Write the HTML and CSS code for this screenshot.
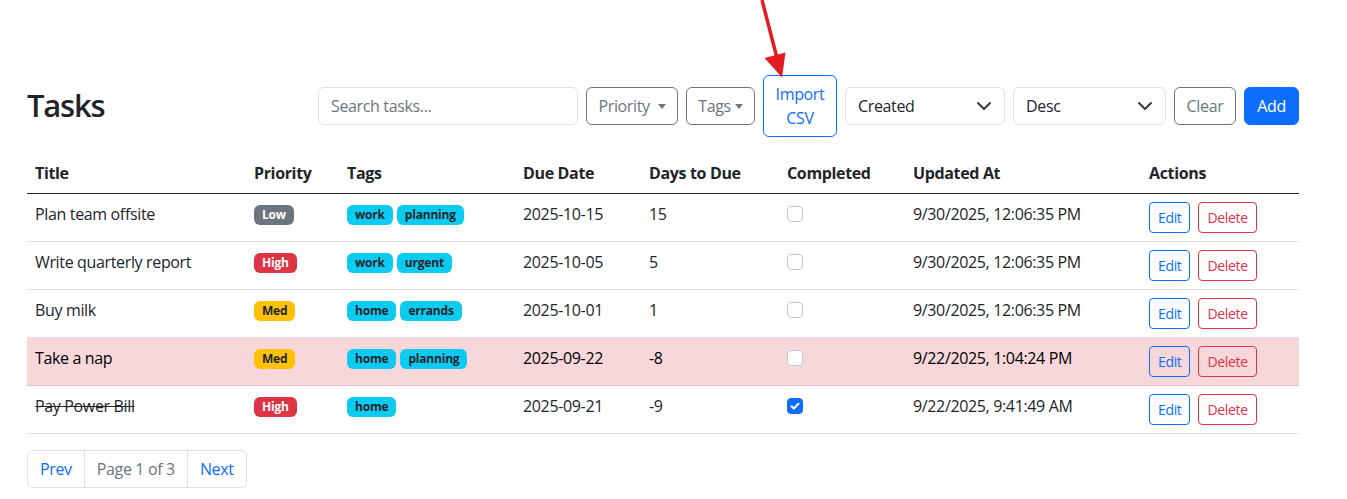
FILE: index.html
```html
<!DOCTYPE html>
<html lang="en">
<head>
<meta charset="utf-8">
<title>Tasks</title>
<link rel="stylesheet" href="styles.css">
</head>
<body>
<svg class="arrow" width="50" height="82" viewBox="0 0 50 82">
  <line x1="12" y1="0" x2="27" y2="58" stroke="#e31b23" stroke-width="3.5"/>
  <polygon points="14.5,58 35.5,52.5 32,77.5" fill="#e31b23"/>
</svg>
<div class="container">
  <div class="header">
    <h2 class="title">Tasks</h2>
    <div class="toolbar">
      <div class="input search">Search tasks...</div>
      <button class="btn btn-outline-secondary w-prio">Priority <span class="caret"></span></button>
      <button class="btn btn-outline-secondary w-tags">Tags<span class="caret"></span></button>
      <button class="btn btn-outline-primary import">Import CSV</button>
      <div class="select sel-created"><span>Created</span><svg width="16" height="16" viewBox="0 0 16 16"><path d="M2 5l6 6 6-6" fill="none" stroke="#343a40" stroke-width="2" stroke-linecap="round" stroke-linejoin="round"/></svg></div>
      <div class="select sel-desc"><span>Desc</span><svg width="16" height="16" viewBox="0 0 16 16"><path d="M2 5l6 6 6-6" fill="none" stroke="#343a40" stroke-width="2" stroke-linecap="round" stroke-linejoin="round"/></svg></div>
      <button class="btn btn-outline-secondary w-clear">Clear</button>
      <button class="btn btn-primary w-add">Add</button>
    </div>
  </div>

  <table class="table">
    <colgroup>
      <col class="c-title"><col class="c-prio"><col class="c-tags"><col class="c-due"><col class="c-days"><col class="c-comp"><col class="c-upd"><col class="c-act">
    </colgroup>
    <thead>
      <tr><th>Title</th><th>Priority</th><th>Tags</th><th>Due Date</th><th>Days to Due</th><th>Completed</th><th>Updated At</th><th>Actions</th></tr>
    </thead>
    <tbody>
      <tr>
        <td>Plan team offsite</td>
        <td><span class="badge b-low">Low</span></td>
        <td><span class="badge b-tag">work</span><span class="badge b-tag">planning</span></td>
        <td>2025-10-15</td>
        <td>15</td>
        <td><span class="check"></span></td>
        <td>9/30/2025, 12:06:35 PM</td>
        <td><div class="actions"><button class="btn btn-sm btn-outline-primary">Edit</button><button class="btn btn-sm btn-outline-danger">Delete</button></div></td>
      </tr>
      <tr>
        <td>Write quarterly report</td>
        <td><span class="badge b-high">High</span></td>
        <td><span class="badge b-tag">work</span><span class="badge b-tag">urgent</span></td>
        <td>2025-10-05</td>
        <td>5</td>
        <td><span class="check"></span></td>
        <td>9/30/2025, 12:06:35 PM</td>
        <td><div class="actions"><button class="btn btn-sm btn-outline-primary">Edit</button><button class="btn btn-sm btn-outline-danger">Delete</button></div></td>
      </tr>
      <tr>
        <td>Buy milk</td>
        <td><span class="badge b-med">Med</span></td>
        <td><span class="badge b-tag">home</span><span class="badge b-tag">errands</span></td>
        <td>2025-10-01</td>
        <td>1</td>
        <td><span class="check"></span></td>
        <td>9/30/2025, 12:06:35 PM</td>
        <td><div class="actions"><button class="btn btn-sm btn-outline-primary">Edit</button><button class="btn btn-sm btn-outline-danger">Delete</button></div></td>
      </tr>
      <tr class="row-danger">
        <td>Take a nap</td>
        <td><span class="badge b-med">Med</span></td>
        <td><span class="badge b-tag">home</span><span class="badge b-tag">planning</span></td>
        <td>2025-09-22</td>
        <td>-8</td>
        <td><span class="check"></span></td>
        <td>9/22/2025, 1:04:24 PM</td>
        <td><div class="actions"><button class="btn btn-sm btn-outline-primary">Edit</button><button class="btn btn-sm btn-outline-danger">Delete</button></div></td>
      </tr>
      <tr>
        <td><span class="done">Pay Power Bill</span></td>
        <td><span class="badge b-high">High</span></td>
        <td><span class="badge b-tag">home</span></td>
        <td>2025-09-21</td>
        <td>-9</td>
        <td><span class="check checked"><svg width="16" height="16" viewBox="0 0 16 16"><path d="M4.5 8.2l2.3 2.3 4.7-4.7" fill="none" stroke="#fff" stroke-width="2" stroke-linecap="round" stroke-linejoin="round"/></svg></span></td>
        <td>9/22/2025, 9:41:49 AM</td>
        <td><div class="actions"><button class="btn btn-sm btn-outline-primary">Edit</button><button class="btn btn-sm btn-outline-danger">Delete</button></div></td>
      </tr>
    </tbody>
  </table>

  <ul class="pagination">
    <li class="page-item"><span class="page-link">Prev</span></li>
    <li class="page-item disabled"><span class="page-link">Page 1 of 3</span></li>
    <li class="page-item"><span class="page-link">Next</span></li>
  </ul>
</div>
</body>
</html>
```

FILE: styles.css
```css
* { box-sizing: border-box; }

body {
  margin: 0;
  font-family: "Open Sans", "Noto Sans", "Liberation Sans", sans-serif;
  font-size: 16px;
  line-height: 1.5;
  letter-spacing: -0.35px;
  color: #212529;
  background: #fff;
  position: relative;
}

.arrow {
  position: absolute;
  left: 750px;
  top: 0;
}

.container {
  width: 1272px;
  margin-left: 27px;
  padding-top: 75px;
}

.header {
  display: flex;
  align-items: center;
  justify-content: space-between;
}

.title {
  margin: 0;
  font-size: 31px;
  font-weight: 600;
  line-height: 1.2;
  letter-spacing: -1.2px;
}

.toolbar {
  display: flex;
  align-items: center;
  gap: 8px;
}

.input {
  height: 38px;
  border: 1px solid #dee2e6;
  border-radius: 6px;
  padding: 6px 12px;
  color: #6c757d;
  background: #fff;
}
.search { width: 260px; }

.select {
  height: 38px;
  border: 1px solid #dee2e6;
  border-radius: 6px;
  padding: 6px 12px;
  display: flex;
  align-items: center;
  justify-content: space-between;
  color: #212529;
  background: #fff;
}
.sel-created { width: 160px; }
.sel-desc { width: 153px; }

.btn {
  font-family: inherit;
  font-size: 16px;
  line-height: 1.5;
  letter-spacing: inherit;
  padding: 6px 12px;
  border: 1px solid transparent;
  border-radius: 6px;
  background: transparent;
  cursor: pointer;
  white-space: nowrap;
}
.btn-outline-secondary { color: #6c757d; border-color: #6c757d; }
.btn-outline-primary { color: #0d6efd; border-color: #0d6efd; }
.btn-outline-danger { color: #dc3545; border-color: #dc3545; }
.btn-primary { color: #fff; background: #0d6efd; border-color: #0d6efd; }

.w-prio { width: 92px; padding: 6px 0; }
.w-tags { width: 69px; padding: 6px 0; }
.w-clear { width: 62px; padding: 6px 0; }
.w-add { width: 55px; padding: 6px 0; }

.import {
  width: 74px;
  white-space: normal;
  padding: 6px 10px;
}

.caret {
  display: inline-block;
  width: 0;
  height: 0;
  margin-left: 4px;
  vertical-align: 3px;
  border-top: 5px solid currentColor;
  border-left: 4px solid transparent;
  border-right: 4px solid transparent;
}

.btn-sm {
  font-size: 14px;
  padding: 4px 8px;
  border-radius: 4px;
}

.table {
  width: 100%;
  table-layout: fixed;
  border-collapse: collapse;
  margin-top: 16px;
  margin-bottom: 16px;
}
.c-title { width: 219px; }
.c-prio { width: 93px; }
.c-tags { width: 176px; }
.c-due { width: 126px; }
.c-days { width: 138px; }
.c-comp { width: 126px; }
.c-upd { width: 236px; }
.c-act { width: 158px; }

.table th, .table td {
  padding: 8px;
  text-align: left;
  vertical-align: top;
  white-space: nowrap;
}
.table th {
  font-weight: 700;
  border-bottom: 1px solid #212529;
}
.table td {
  border-bottom: 1px solid #dee2e6;
}
.row-danger td {
  background: #f8d7da;
  color: #000;
  border-bottom-color: #dfc2c4;
}

.done { text-decoration: line-through; }

.badge {
  display: inline-block;
  font-size: 12px;
  font-weight: 700;
  line-height: 1;
  letter-spacing: -0.2px;
  padding: 4px 8px;
  border-radius: 6px;
  vertical-align: 1px;
}
.b-tag { background: #0dcaf0; color: #212529; margin-right: 4px; }
.b-low { background: #6c757d; color: #fff; }
.b-high { background: #dc3545; color: #fff; }
.b-med { background: #ffc107; color: #212529; }

.check {
  display: inline-block;
  width: 16px;
  height: 16px;
  margin-top: 4px;
  border: 1px solid #c4c8cc;
  border-radius: 4px;
  background: #fff;
  vertical-align: top;
  position: relative;
}
.check.checked {
  background: #0d6efd;
  border-color: #0d6efd;
}
.check svg {
  display: block;
  margin: -1px;
}

.actions {
  display: flex;
  gap: 8px;
}

.pagination {
  display: flex;
  list-style: none;
  margin: 0;
  padding: 0;
}
.page-link {
  display: block;
  padding: 6px 12px;
  border: 1px solid #dee2e6;
  color: #0d6efd;
  background: #fff;
}
.page-item + .page-item .page-link { margin-left: -1px; }
.page-item:first-child .page-link { border-radius: 6px 0 0 6px; }
.page-item:last-child .page-link { border-radius: 0 6px 6px 0; }
.page-item.disabled .page-link { color: #6c757d; }
```
